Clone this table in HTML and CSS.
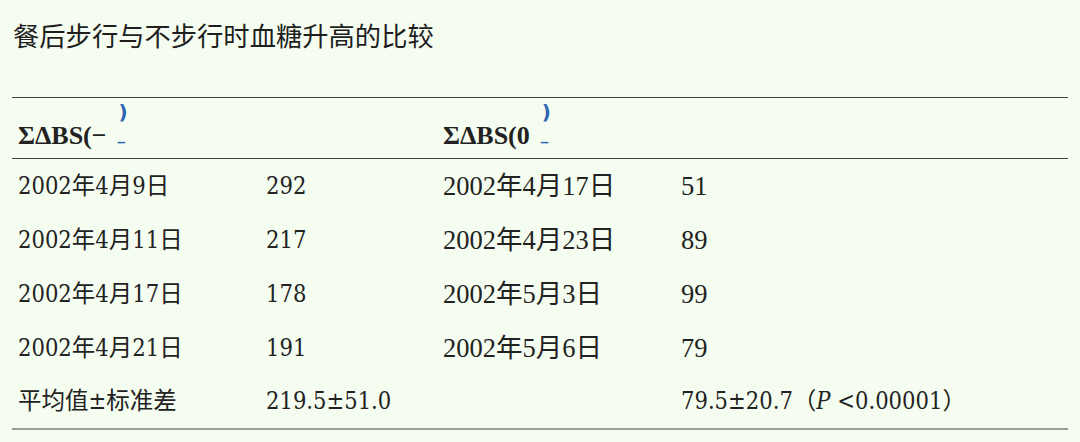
FILE: index.html
```html
<!DOCTYPE html>
<html lang="zh">
<head>
<meta charset="utf-8">
<link rel="stylesheet" href="styles.css">
</head>
<body>
<div class="page">
  <h1 class="title">餐后步行与不步行时血糖升高的比较</h1>
  <table class="data">
    <colgroup>
      <col class="c1"><col class="c2"><col class="c3"><col class="c4">
    </colgroup>
    <thead>
      <tr>
        <th colspan="2"><span class="hd">ΣΔBS(−</span><span class="mark"><span class="sup">)</span><span class="sub">_</span></span></th>
        <th colspan="2"><span class="hd">ΣΔBS(0</span><span class="mark"><span class="sup">)</span><span class="sub">_</span></span></th>
      </tr>
    </thead>
    <tbody>
      <tr><td>2002年4月9日</td><td>292</td><td class="tm">2002年4月17日</td><td class="tm">51</td></tr>
      <tr><td>2002年4月11日</td><td>217</td><td class="tm">2002年4月23日</td><td class="tm">89</td></tr>
      <tr><td>2002年4月17日</td><td>178</td><td class="tm">2002年5月3日</td><td class="tm">99</td></tr>
      <tr><td>2002年4月21日</td><td>191</td><td class="tm">2002年5月6日</td><td class="tm">79</td></tr>
      <tr class="last"><td>平均值±标准差</td><td>219.5±51.0</td><td></td><td>79.5±20.7（<i>P</i> &lt;0.00001）</td></tr>
    </tbody>
  </table>
</div>
</body>
</html>
```

FILE: styles.css
```css
html, body {
  margin: 0;
  padding: 0;
  background: #f5fdf0;
}
.page {
  width: 1080px;
  height: 442px;
  padding: 0 12px;
  box-sizing: border-box;
  color: #222;
  font-family: "DejaVu Serif Condensed", "DejaVu Serif", "Noto Sans CJK SC", serif;
  font-stretch: condensed;
}
.title {
  margin: 0;
  padding: 16px 0 0 1px;
  height: 97px;
  box-sizing: border-box;
  font-family: "Noto Sans CJK SC", sans-serif;
  font-stretch: normal;
  font-weight: 400;
  font-size: 26.3px;
  line-height: 38px;
  color: #1e1e1e;
}
.data {
  width: 1056px;
  border-collapse: collapse;
  table-layout: fixed;
}
.c1 { width: 248px; }
.c2 { width: 177px; }
.c3 { width: 238px; }
.c4 { width: auto; }
.data thead tr {
  height: 61px;
  border-top: 1.5px solid #444;
  border-bottom: 1.5px solid #444;
}
.data th {
  text-align: left;
  padding: 14px 0 0 6px;
  vertical-align: middle;
  font-family: "Liberation Serif", serif;
  font-stretch: normal;
  font-weight: 700;
  font-size: 26px;
  white-space: nowrap;
}
.hd {
  vertical-align: middle;
}
.mark {
  display: inline-flex;
  flex-direction: column;
  align-items: flex-start;
  vertical-align: middle;
  margin-left: 11px;
  color: #2f66b3;
  font-family: "DejaVu Sans", sans-serif;
  font-weight: 700;
  line-height: 14px;
}
.sup { position: relative; top: -17px; left: 1px; font-size: 20px; }
.sub { position: relative; top: -8px; font-size: 15px; }
.data tbody tr {
  height: 54px;
}
.data tbody tr.last {
  border-bottom: 2px solid #9a9e98;
}
.data td {
  padding: 0 0 0 6px;
  font-size: 23.5px;
  line-height: 30px;
  vertical-align: middle;
  white-space: nowrap;
}
.data td.tm {
  font-family: "Liberation Serif", "Noto Sans CJK SC", serif;
  font-stretch: normal;
  font-size: 26.5px;
}
i { font-style: italic; }
```
